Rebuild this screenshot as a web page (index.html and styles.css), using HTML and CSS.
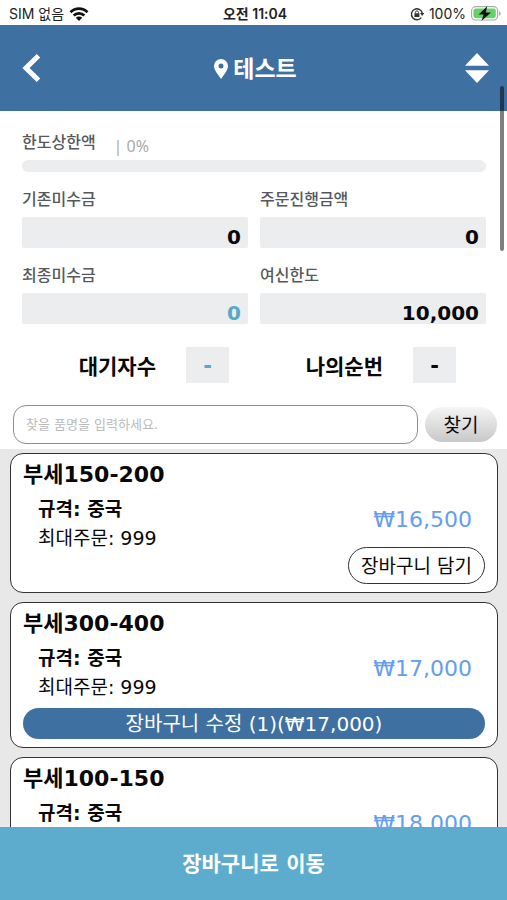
FILE: index.html
```html
<!DOCTYPE html>
<html lang="ko">
<head>
<meta charset="utf-8">
<meta name="viewport" content="width=device-width, initial-scale=1">
<title>테스트</title>
<link rel="stylesheet" href="styles.css">
</head>
<body>
<div class="app">
  <div class="status">
    <div class="status-side">
      <span>SIM 없음</span>
      <svg width="20" height="14" viewBox="0 0 20 14" fill="none" stroke="#111" stroke-width="2.7">
        <path d="M1.5 5.2a12 12 0 0 1 17 0"/>
        <path d="M4.7 8.5a7.5 7.5 0 0 1 10.6 0"/>
        <path d="M10 14l-3.2-3.3a4.6 4.6 0 0 1 6.4 0z" fill="#111" stroke="none"/>
      </svg>
    </div>
    <span class="status-time">오전 11:04</span>
    <div class="status-side status-right">
      <svg width="14" height="14" viewBox="0 0 14 14" fill="none" stroke="#333" stroke-width="1.4">
        <path d="M11.3 10.6A5.5 5.5 0 1 1 12.3 6"/>
        <path d="M10 6h4.2l-2 3z" fill="#333" stroke="none"/>
        <rect x="4.4" y="6.3" width="5" height="3.7" fill="#333" stroke="none"/>
        <path d="M5.4 6.6V5.4a1.5 1.5 0 0 1 3 0v1.2" stroke-width="1"/>
      </svg>
      <span>100%</span>
      <svg width="30" height="15" viewBox="0 0 30 15">
        <rect x=".6" y=".6" width="26" height="13.4" rx="4" fill="#fff" stroke="#a9a9a9" stroke-width="1.1"/>
        <rect x="2.4" y="2.4" width="22.4" height="9.8" rx="2.4" fill="#66d16b"/>
        <path d="M28 5v4.800q1.600-.8 1.600-2.400T28 5z" fill="#a9a9a9"/>
        <path d="M16.200.2L7.600 8.400h5L10.600 14.800l9.400-8.400h-5.200z" fill="#111"/>
      </svg>
    </div>
  </div>

  <header class="topbar">
    <button class="icon-button" type="button" aria-label="뒤로">
      <svg width="18" height="28" viewBox="0 0 18 28" fill="none" stroke="#fff" stroke-width="5"><path d="M16.500 1.800L4 14l12.500 12.200"/></svg>
    </button>
    <h1 class="title">
      <svg width="14" height="20" viewBox="0 0 14 20"><path fill="#fff" fill-rule="evenodd" d="M7 0a7 7 0 0 0-7 7c0 4.600 5 9.500 7 13 2-3.500 7-8.400 7-13a7 7 0 0 0-7-7zm0 4.600a2.500 2.500 0 1 1 0 5 2.500 2.500 0 0 1 0-5z"/></svg>
      <span>테스트</span>
    </h1>
    <button class="icon-button icon-end" type="button" aria-label="정렬">
      <svg width="24" height="30" viewBox="0 0 24 30" fill="#fff"><path d="M12 0l12 12.800H0z"/><path d="M0 17.200h24L12 30z"/></svg>
    </button>
  </header>

  <main class="content">
    <section class="summary">
      <div class="limit">
        <span class="label">한도상한액</span>
        <span class="percent">| 0%</span>
      </div>
      <div class="track"></div>
      <div class="amounts">
        <div class="amount"><span class="label">기존미수금</span><output class="value">0</output></div>
        <div class="amount"><span class="label">주문진행금액</span><output class="value">0</output></div>
        <div class="amount"><span class="label">최종미수금</span><output class="value accent">0</output></div>
        <div class="amount"><span class="label">여신한도</span><output class="value">10,000</output></div>
      </div>
      <div class="queue">
        <div class="queue-item"><span class="queue-name">대기자수</span><output class="count accent">-</output></div>
        <div class="queue-item"><span class="queue-name">나의순번</span><output class="count">-</output></div>
      </div>
    </section>

    <form class="search">
      <input class="search-input" type="text" aria-label="품명" placeholder="찾을 품명을 입력하세요.">
      <button class="search-button" type="button">찾기</button>
    </form>

    <section class="list">
      <article class="card">
        <h2 class="name">부세150-200</h2>
        <div class="details">
          <div><p class="spec">규격: 중국</p><p class="max">최대주문: 999</p></div>
          <span class="price">₩16,500</span>
        </div>
        <button class="add" type="button">장바구니 담기</button>
      </article>
      <article class="card">
        <h2 class="name">부세300-400</h2>
        <div class="details">
          <div><p class="spec">규격: 중국</p><p class="max">최대주문: 999</p></div>
          <span class="price">₩17,000</span>
        </div>
        <button class="edit" type="button">장바구니 수정 (1)(₩17,000)</button>
      </article>
      <article class="card">
        <h2 class="name">부세100-150</h2>
        <div class="details">
          <div><p class="spec">규격: 중국</p><p class="max">최대주문: 999</p></div>
          <span class="price">₩18,000</span>
        </div>
        <button class="add" type="button">장바구니 담기</button>
      </article>
    </section>
  </main>

  <button class="go-cart" type="button">장바구니로 이동</button>
  <div class="scrollbar"></div>
</div>
</body>
</html>
```
FILE: styles.css
```css
* { box-sizing: border-box; }

body {
  margin: 0;
  color: #080808;
  background: #fff;
  font-family: "DejaVu Sans", "Noto Sans CJK KR", sans-serif;
}

button, input { font: inherit; color: inherit; margin: 0; }
button { padding: 0; border: 0; background: none; }
h1, h2, p { margin: 0; }
svg { display: block; flex: none; }

.app {
  position: relative;
  display: flex;
  flex-direction: column;
  height: 100vh;
  overflow: hidden;
}

.status {
  display: grid;
  grid-template-columns: 1fr auto 1fr;
  align-items: center;
  flex: none;
  height: 25px;
  padding: 2px 6px 0 9px;
  font: 14px/20px Inter, "Noto Sans CJK KR", sans-serif;
  color: #222;
}
.status-side { display: flex; align-items: center; gap: 5px; }
.status-right { justify-content: flex-end; }
.status-time { font-weight: 600; }

.topbar {
  display: grid;
  grid-template-columns: 1fr auto 1fr;
  align-items: center;
  flex: none;
  height: 86px;
  padding: 0 18px 0 20px;
  background: #3f70a2;
}
.icon-button { justify-self: start; padding: 4px 2px; }
.icon-end { justify-self: end; padding: 4px 0; }
.title {
  display: flex;
  align-items: center;
  gap: 5px;
  padding: 2px 0 0 2px;
  font-size: 23px;
  line-height: 32px;
  color: #fff;
}

.content {
  display: flex;
  flex: 1;
  flex-direction: column;
  min-height: 0;
  overflow: hidden;
}

.summary { flex: none; padding: 20px 21px 0 22px; }
.limit { display: flex; gap: 18px; height: 29px; }
.label {
  font-size: 16px;
  line-height: 24px;
  font-weight: 500;
  color: #55595e;
}
.percent {
  padding-top: 4px;
  font-family: "Noto Sans", sans-serif;
  font-size: 16px;
  line-height: 22px;
  color: #aaa;
}
.track { height: 12px; border-radius: 6px; background: #ecedef; }

.amounts {
  display: grid;
  grid-template-columns: 1fr 1fr;
  gap: 16px 12px;
  padding-top: 16px;
}
.amount { display: flex; flex-direction: column; gap: 5px; }
.value {
  height: 31px;
  padding: 8px 7px 0 0;
  border-radius: 2px;
  background: #ecedef;
  font-size: 20px;
  line-height: 24px;
  font-weight: 700;
  text-align: right;
}
.accent { color: #55a9cb; }

.queue { display: grid; grid-template-columns: 1fr 1fr; padding-top: 23px; }
.queue-item {
  display: flex;
  align-items: center;
  justify-content: flex-end;
  gap: 30px;
  padding-right: 25px;
  font-size: 21px;
  line-height: 36px;
  font-weight: 700;
}
.queue-item:last-child { padding-right: 30px; }
.queue-name { height: 36px; line-height: 40px; }
.count { width: 43px; height: 36px; line-height: 38px; background: #ecedef; text-align: center; }

.search {
  display: flex;
  align-items: center;
  flex: none;
  gap: 7px;
  padding: 22px 10px 5px 13px;
}
.search-input {
  flex: 1;
  min-width: 0;
  height: 39px;
  padding: 0 12px;
  border: 1px solid #8e8e8e;
  border-radius: 13px;
  background: #fff;
  font-size: 13px;
}
.search-input::placeholder { color: #bbb; opacity: 1; }
.search-button {
  width: 72px;
  height: 35px;
  border-radius: 18px;
  background: linear-gradient(#f5f5f5, #c8c8c8);
  font-size: 19px;
  line-height: 34px;
}

.list {
  display: flex;
  flex: 1;
  flex-direction: column;
  gap: 9px;
  min-height: 0;
  padding: 4px 9px 0 10px;
  background: #e8e8e8;
}
.card {
  display: flex;
  flex: none;
  flex-direction: column;
  padding: 5px 12px 8px;
  border: 1px solid #333;
  border-radius: 13px;
  background: #fff;
}
.name { font-size: 22px; line-height: 32px; }
.details {
  display: flex;
  align-items: center;
  justify-content: space-between;
  padding: 4px 13px 0 15px;
}
.spec, .max { font-size: 19px; line-height: 29px; }
.spec { font-weight: 700; }
.price {
  padding-bottom: 9px;
  font-size: 22px;
  line-height: 30px;
  color: #659df1;
}
.add {
  align-self: flex-end;
  height: 37px;
  margin-top: -6px;
  padding: 0 12px;
  border: 1px solid #333;
  border-radius: 19px;
  font-size: 19px;
  line-height: 34px;
}
.edit {
  height: 31px;
  margin-top: 6px;
  border-radius: 16px;
  background: #3f70a2;
  color: #fff;
  font-size: 20px;
  line-height: 30px;
}

.go-cart {
  flex: none;
  height: 73px;
  padding-bottom: 4px;
  background: #5dabcd;
  color: #fff;
  font-size: 21px;
  font-weight: 700;
}

.scrollbar {
  position: absolute;
  top: 86px;
  right: 3px;
  width: 4px;
  height: 165px;
  border-radius: 2px;
  background: rgba(0, 0, 0, .5);
}
```
